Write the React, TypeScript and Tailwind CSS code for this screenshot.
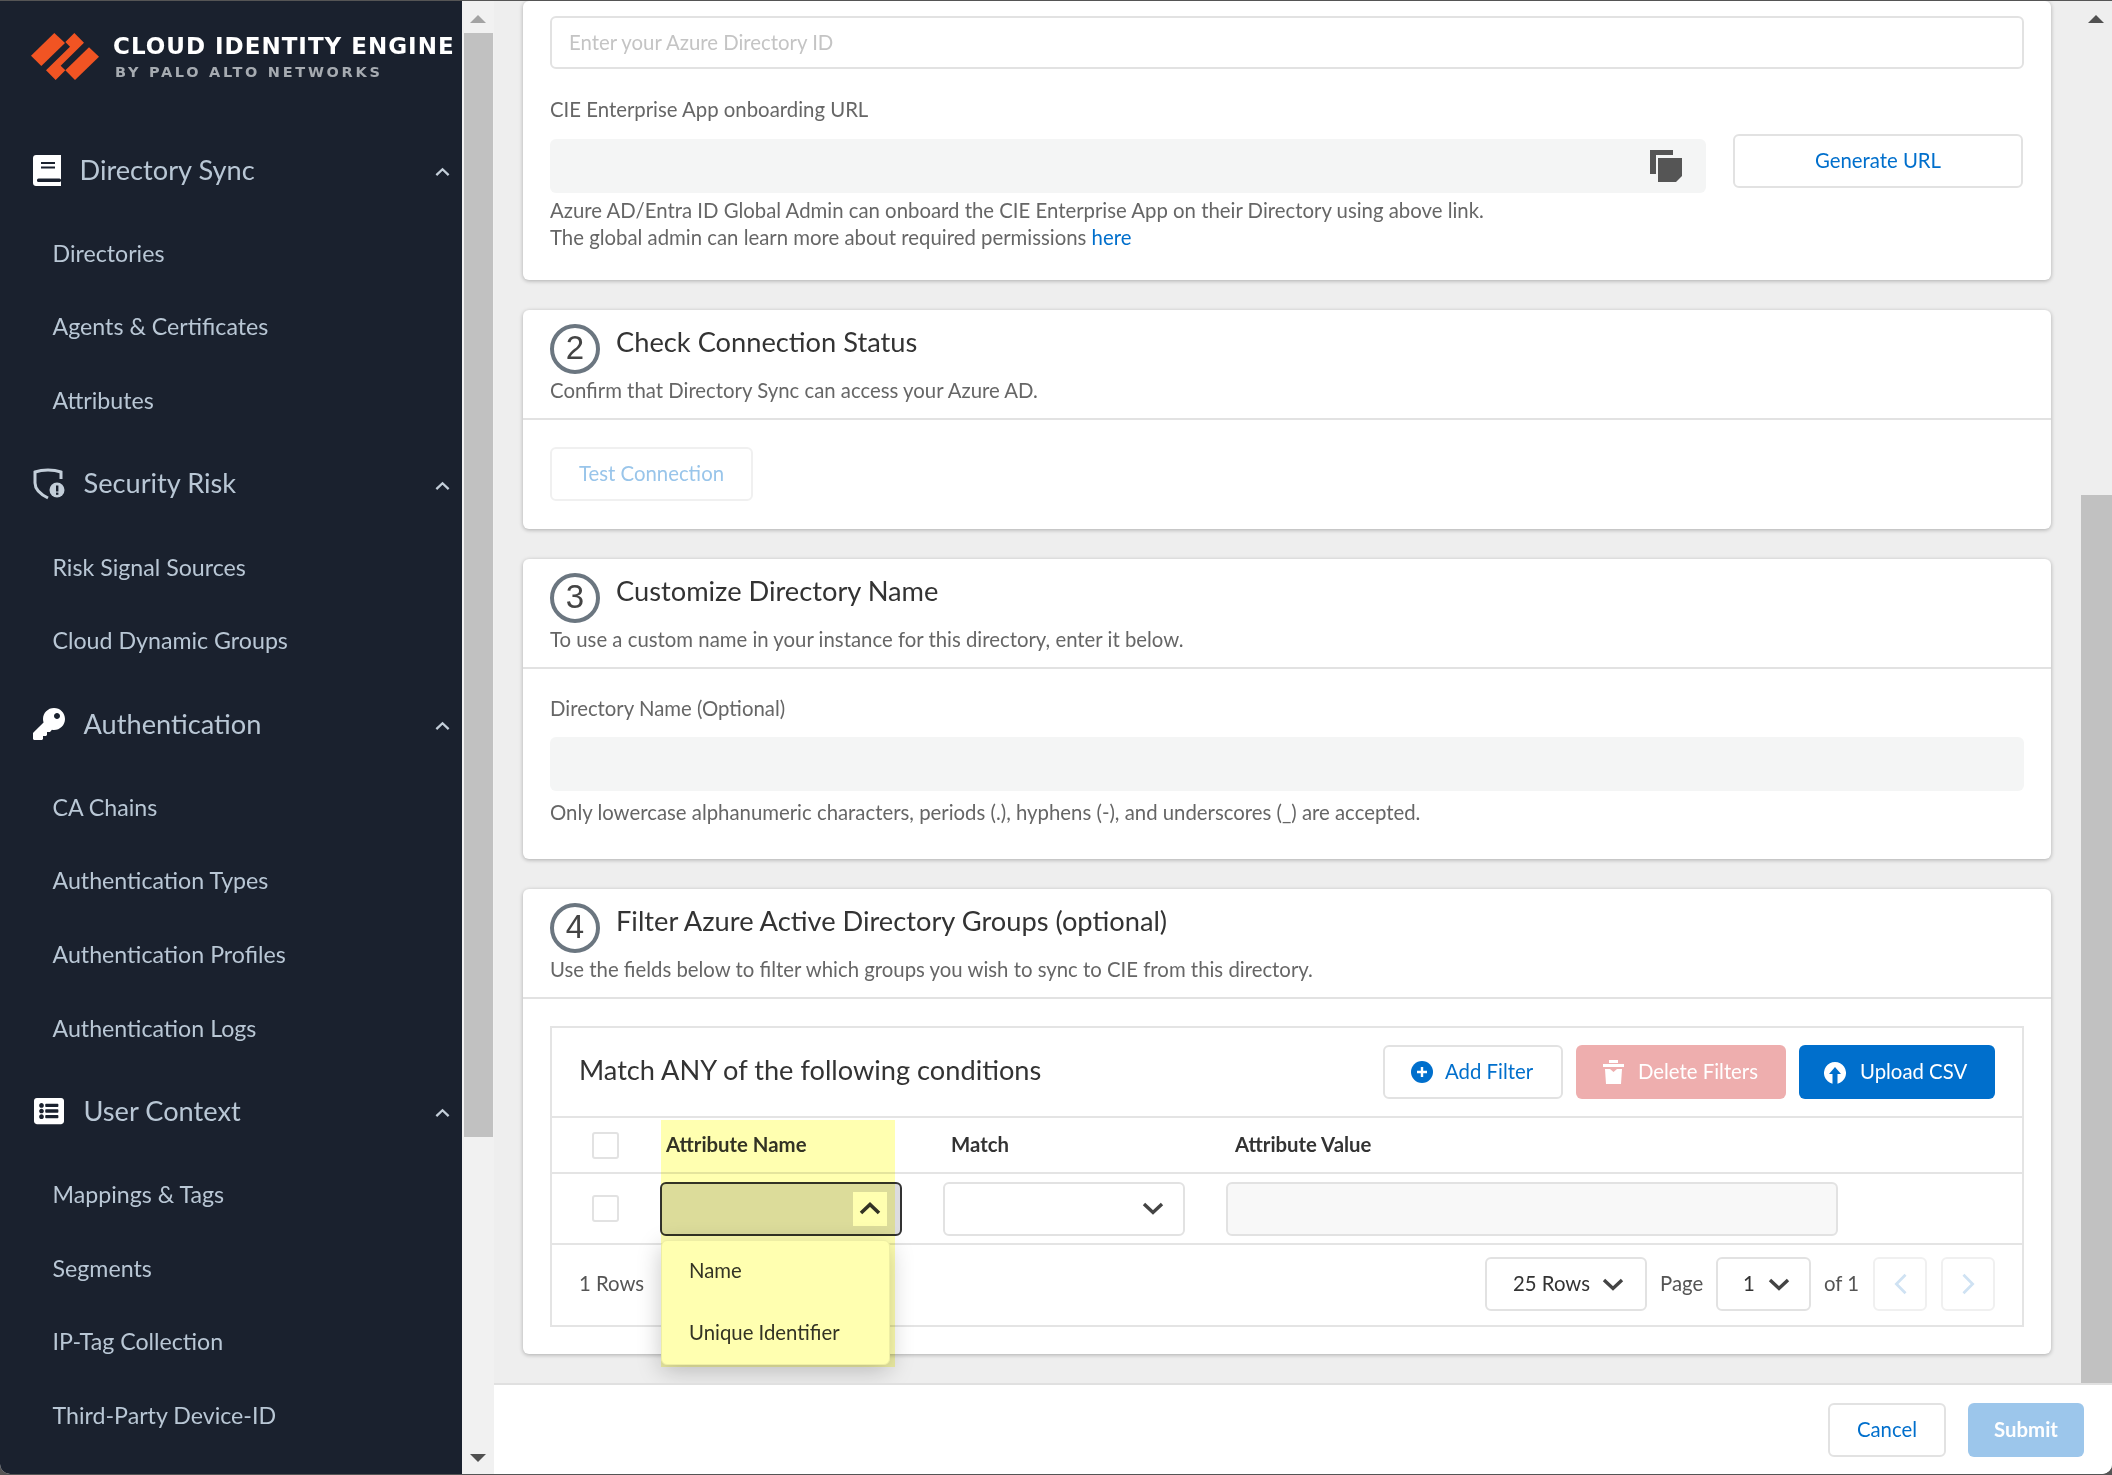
import React from "react";
import { FaKey, FaListAlt } from "react-icons/fa";

const groups = [
  { label: "Directory Sync", icon: "book", items: ["Directories", "Agents & Certificates", "Attributes"] },
  { label: "Security Risk", icon: "shield", items: ["Risk Signal Sources", "Cloud Dynamic Groups"] },
  { label: "Authentication", icon: "key", items: ["CA Chains", "Authentication Types", "Authentication Profiles", "Authentication Logs"] },
  { label: "User Context", icon: "list", items: ["Mappings & Tags", "Segments", "IP-Tag Collection", "Third-Party Device-ID"] },
];

function Chevron({ up, className, color = "#444", sw = 3.2 }: { up?: boolean; className?: string; color?: string; sw?: number }) {
  return (
    <svg viewBox="0 0 22 13" className={className} fill="none">
      <polyline points={up ? "2,11 11,2.5 20,11" : "2,2 11,10.5 20,2"} stroke={color} strokeWidth={sw} />
    </svg>
  );
}

function GroupIcon({ name }: { name: string }) {
  if (name === "book")
    return (
      <svg viewBox="0 0 28 31" className="w-[28px] h-[31px]">
        <path d="M3 0H28V31H3C1.3 31 0 29.7 0 28V3C0 1.3 1.3 0 3 0Z" fill="#fff" />
        <rect x="8" y="7" width="14" height="2" fill="#1a212e" />
        <rect x="8" y="11.5" width="14" height="2" fill="#1a212e" />
        <rect x="4" y="23.5" width="24" height="3.5" rx="1.5" fill="#1a212e" />
      </svg>
    );
  if (name === "shield")
    return (
      <svg viewBox="0 0 32 32" className="w-[32px] h-[32px]">
        <path d="M15 2C10 2 6 2.6 2 4V15C2 21 7 26 15 30" fill="none" stroke="#c3ced9" strokeWidth="3" />
        <path d="M15 2C20 2 24 2.6 28 4V11" fill="none" stroke="#c3ced9" strokeWidth="3" />
        <circle cx="24" cy="22" r="7.5" fill="#c3ced9" />
        <rect x="23" y="17.5" width="2.4" height="6" fill="#1a212e" />
        <rect x="23" y="24.6" width="2.4" height="2.2" fill="#1a212e" />
      </svg>
    );
  if (name === "key") return <FaKey className="w-[32px] h-[32px] text-white" />;
  return <FaListAlt className="w-[32px] h-[30px] text-white" />;
}

function Sidebar() {
  return (
    <aside className="w-[462px] shrink-0 h-full bg-[#1a212e] overflow-hidden">
      <div className="h-[122.5px] flex items-start pl-[31px] pt-[32px]">
        <svg viewBox="33 37 204 141" className="w-[68px] h-[47px] shrink-0" fill="#f15423">
          <polygon points="103,37 135,67 64,136 33,105" />
          <polygon points="163,37 192,66 122,135 136,149 107,178 78,149 150,78 136,64" />
          <polygon points="207,80 237,108 165,178 136,149" />
        </svg>
        <div className="ml-[14px] whitespace-nowrap font-['DejaVu_Sans',sans-serif] font-bold">
          <div className="text-[23px] leading-[26px] text-white tracking-[1px]">CLOUD IDENTITY ENGINE</div>
          <div className="mt-[5px] ml-[2px] text-[14.5px] leading-[16px] text-[#a6abb1] tracking-[2.7px]">BY PALO ALTO NETWORKS</div>
        </div>
      </div>
      {groups.map((g) => (
        <div key={g.label}>
          <div className="h-[93px] flex items-center pl-[33px] pr-[12px]">
            <GroupIcon name={g.icon} />
            <span className="ml-[18.5px] text-[27.2px] text-[#b9c7d5]">{g.label}</span>
            <Chevron up color="#c3ced9" sw={3.4} className="ml-auto w-[15px] h-[10px] mt-[4px]" />
          </div>
          {g.items.map((i) => (
            <div key={i} className="h-[73.6px] flex items-center pl-[52.5px] text-[23.2px] text-[#b9c7d5]">
              {i}
            </div>
          ))}
        </div>
      ))}
    </aside>
  );
}

function SideScrollbar() {
  return (
    <div className="w-[32px] shrink-0 h-full bg-[#f1f1f1] flex flex-col items-center relative">
      <svg viewBox="0 0 16 8" className="w-[16px] h-[8px] mt-[14px]"><polygon points="8,0 16,8 0,8" fill="#a3a3a3" /></svg>
      <div className="w-[29px] h-[1104px] mt-[10px] bg-[#c1c1c1]" />
      <svg viewBox="0 0 16 8" className="w-[16px] h-[8px] mt-auto mb-[12px]"><polygon points="0,0 16,0 8,8" fill="#505050" /></svg>
    </div>
  );
}

function CardHeader({ n, title, sub }: { n: string; title: string; sub: string }) {
  return (
    <div className="h-[110px] border-b-2 border-[#e2e2e2] px-[27px] pt-[14px]">
      <div className="flex items-start">
        <div className="w-[50px] h-[50px] shrink-0 rounded-full border-[4px] border-[#6b7680] flex items-center justify-center font-['Liberation_Sans',sans-serif] text-[33px] leading-[38px] text-[#444] pb-[2px]">
          {n}
        </div>
        <div className="ml-[16px] -mt-[1px] text-[27.25px] leading-[38px] text-[#333]">{title}</div>
      </div>
      <div className="mt-[3px] text-[20.35px] leading-[27px] text-[#666]">{sub}</div>
    </div>
  );
}

const cardCls = "bg-white rounded-[6px] shadow-[0_1px_4px_rgba(0,0,0,0.28)]";

function Card1() {
  return (
    <div className={cardCls + " h-[279px] px-[27px] pt-[15px]"}>
      <div className="h-[53px] border-2 border-[#e2e2e2] rounded-[6px] flex items-center px-[17px] text-[20.35px] text-[#c4c4c4]">
        <span className="-mt-[1px]">Enter your Azure Directory ID</span>
      </div>
      <div className="mt-[27px] text-[20.35px] leading-[27px] text-[#666]">CIE Enterprise App onboarding URL</div>
      <div className="mt-[11px] flex items-start">
        <div className="mt-[5px] w-[1156px] h-[54px] bg-[#f4f5f5] rounded-[6px] flex items-center justify-end pr-[24px]">
          <svg viewBox="0 0 32 32" className="w-[32px] h-[32px]">
            <path d="M0 0H23V5H6V24H0Z" fill="#555" />
            <path d="M8 8H32V26L26 32H8Z" fill="#555" />
          </svg>
        </div>
        <div className="ml-[27px] w-[290px] h-[54px] border-2 border-[#e2e2e2] rounded-[6px] flex items-center justify-center text-[20.35px] text-[#006fcc]">
          <span className="-mt-[2px]">Generate URL</span>
        </div>
      </div>
      <div className="mt-[4px] text-[20.35px] leading-[27px] text-[#666]">
        <div>Azure AD/Entra ID Global Admin can onboard the CIE Enterprise App on their Directory using above link.</div>
        <div>
          The global admin can learn more about required permissions <span className="text-[#006fcc]">here</span>
        </div>
      </div>
    </div>
  );
}

function Card2() {
  return (
    <div className={cardCls + " h-[219px]"}>
      <CardHeader n="2" title="Check Connection Status" sub="Confirm that Directory Sync can access your Azure AD." />
      <div className="px-[27px] pt-[27px]">
        <div className="w-[203px] h-[54px] border-2 border-[#f0f0f0] rounded-[6px] flex items-center justify-center text-[20.35px] text-[#99c5ea]">
          <span className="-mt-[1px]">Test Connection</span>
        </div>
      </div>
    </div>
  );
}

function Card3() {
  return (
    <div className={cardCls + " h-[300px]"}>
      <CardHeader n="3" title="Customize Directory Name" sub="To use a custom name in your instance for this directory, enter it below." />
      <div className="px-[27px] pt-[26px]">
        <div className="text-[20.35px] leading-[27px] text-[#666]">Directory Name (Optional)</div>
        <div className="mt-[15px] h-[54px] bg-[#f4f5f5] rounded-[6px]" />
        <div className="mt-[8px] text-[20.35px] leading-[27px] text-[#666]">
          Only lowercase alphanumeric characters, periods (.), hyphens (-), and underscores (_) are accepted.
        </div>
      </div>
    </div>
  );
}

function PagerBox({ w, ml, children }: { w: string; ml: string; children: React.ReactNode }) {
  return <div className={`${w} ${ml} h-[54px] border-2 border-[#e2e2e2] rounded-[6px] flex items-center text-[20.35px] text-[#333]`}>{children}</div>;
}

function FilterTable() {
  return (
    <div className="relative h-[301px] border-2 border-[#e4e4e4] flex flex-col">
      <div className="h-[88px] shrink-0 flex items-center pl-[27px]">
        <div className="text-[27.2px] text-[#333] -mt-[3px]">Match ANY of the following conditions</div>
        <div className="ml-auto flex items-center mr-[27px] text-[20.35px]">
          <div className="w-[180px] h-[54px] border-2 border-[#e2e2e2] rounded-[6px] flex items-center pl-[26px] text-[#006fcc]">
            <svg viewBox="0 0 22 22" className="w-[22px] h-[22px]">
              <circle cx="11" cy="11" r="11" fill="#006fcc" />
              <path d="M11 6V16M6 11H16" stroke="#fff" strokeWidth="2.4" />
            </svg>
            <span className="ml-[12px] -mt-[1px]">Add Filter</span>
          </div>
          <div className="ml-[13px] w-[210px] h-[54px] bg-[#eeaeae] rounded-[6px] flex items-center pl-[27px] text-white">
            <svg viewBox="0 0 21 24" className="w-[21px] h-[24px]" fill="#fff">
              <rect x="6" y="0" width="9" height="3" />
              <rect x="0" y="4" width="21" height="3" />
              <path d="M2 9H7L10.5 12L14 9H19L18 24H3Z" />
            </svg>
            <span className="ml-[14px] -mt-[1px]">Delete Filters</span>
          </div>
          <div className="ml-[13px] w-[196px] h-[54px] bg-[#006fcc] rounded-[6px] flex items-center pl-[25px] text-white">
            <svg viewBox="0 0 22 24" className="w-[22px] h-[24px]">
              <path d="M8.5 23.7A11 11 0 1 1 13.5 23.7V14H17L11 7L5 14H8.5Z" fill="#fff" />
            </svg>
            <span className="ml-[14px] -mt-[1px]">Upload CSV</span>
          </div>
        </div>
      </div>
      <div className="h-[56px] shrink-0 border-t-2 border-[#e4e4e4] grid grid-cols-[108px_283px_282px_1fr] items-center text-[20.35px] font-bold text-[#333]">
        <div className="ml-[40px] w-[27px] h-[27px] border-2 border-[#e2e2e2] rounded-[3px]" />
        <div className="pl-[6px] -mt-[2px]">Attribute Name</div>
        <div className="pl-[8px] -mt-[2px]">Match</div>
        <div className="pl-[10px] -mt-[2px]">Attribute Value</div>
      </div>
      <div className="h-[71px] shrink-0 border-t-2 border-[#e4e4e4] grid grid-cols-[108px_283px_283px_1fr] items-center">
        <div className="ml-[40px] w-[27px] h-[27px] border-2 border-[#e2e2e2] rounded-[3px]" />
        <div className="relative">
          <div className="w-[242px] h-[54px] border-2 border-[#333] rounded-[6px] bg-[#dcdce0] flex items-center justify-end pr-[13px]">
            <div className="w-[34px] h-[34px] bg-white flex items-center justify-center">
              <Chevron up color="#333" sw={3.6} className="w-[22px] h-[13px]" />
            </div>
          </div>
          <div className="absolute left-[1px] top-[58px] w-[229px] h-[125px] z-10 bg-white border border-[#eee] rounded-[6px] shadow-[0_6px_24px_rgba(0,0,0,0.22)] text-[20.35px] text-[#333]">
            <div className="h-[62px] flex items-center pl-[27px] -mt-[1px]">Name</div>
            <div className="h-[62px] flex items-center pl-[27px]">Unique Identifier</div>
          </div>
        </div>
        <div className="w-[242px] h-[54px] border-2 border-[#e2e2e2] rounded-[6px] flex items-center justify-end pr-[19px]">
          <Chevron color="#444" sw={3.4} className="w-[22px] h-[13px]" />
        </div>
        <div className="w-[612px] h-[54px] border-2 border-[#e2e2e2] rounded-[6px] bg-[#f8f8f8]" />
      </div>
      <div className="flex-1 border-t-2 border-[#e4e4e4] flex items-center pl-[27px] pb-[2px] text-[20.35px] text-[#555]">
        <div className="-mt-[2px]">1 Rows</div>
        <div className="ml-auto flex items-center pr-[27px]">
          <PagerBox w="w-[162px]" ml="">
            <span className="ml-[26px] -mt-[1px]">25 Rows</span>
            <Chevron color="#444" sw={3.4} className="ml-[12px] w-[22px] h-[13px]" />
          </PagerBox>
          <span className="ml-[13px] w-[43px] -mt-[1px]">Page</span>
          <PagerBox w="w-[95px]" ml="ml-[13px]">
            <span className="ml-[25px] -mt-[1px]">1</span>
            <Chevron color="#444" sw={3.4} className="ml-[13px] w-[22px] h-[13px]" />
          </PagerBox>
          <span className="ml-[13px] w-[36px] -mt-[1px] whitespace-nowrap">of 1</span>
          <div className="ml-[13px] w-[54px] h-[54px] border-2 border-[#f0f0f0] rounded-[6px] flex items-center justify-center">
            <svg viewBox="0 0 15 24" className="w-[15px] h-[22px]" fill="none"><polyline points="13,2 3,12 13,22" stroke="#cfe2f3" strokeWidth="3" /></svg>
          </div>
          <div className="ml-[14px] w-[54px] h-[54px] border-2 border-[#f0f0f0] rounded-[6px] flex items-center justify-center">
            <svg viewBox="0 0 15 24" className="w-[15px] h-[22px]" fill="none"><polyline points="2,2 12,12 2,22" stroke="#cfe2f3" strokeWidth="3" /></svg>
          </div>
        </div>
      </div>
      <div className="absolute left-[109px] top-[92px] w-[234px] h-[247px] z-20 bg-[#ffffb0] mix-blend-multiply pointer-events-none" />
    </div>
  );
}

function Card4() {
  return (
    <div className={cardCls + " h-[465px]"}>
      <CardHeader n="4" title="Filter Azure Active Directory Groups (optional)" sub="Use the fields below to filter which groups you wish to sync to CIE from this directory." />
      <div className="px-[27px] pt-[27px]">
        <FilterTable />
      </div>
    </div>
  );
}

export default function App() {
  return (
    <div className="w-[2112px] h-[1475px] bg-[#555] pt-[1px] pb-[1px] font-['Lato',sans-serif] overflow-hidden">
      <div className="w-full h-full rounded-b-[10px] overflow-hidden flex bg-white">
        <Sidebar />
        <SideScrollbar />
        <main className="flex-1 min-w-0 flex flex-col h-full">
          <div className="flex-1 min-h-0 flex bg-[#eeeeee] overflow-hidden">
            <div className="flex-1 min-w-0 pl-[29px] pr-[29px] flex flex-col gap-[30px]">
              <Card1 />
              <Card2 />
              <Card3 />
              <Card4 />
            </div>
            <div className="w-[32px] shrink-0 flex flex-col items-center">
              <svg viewBox="0 0 16 8" className="w-[16px] h-[8px] mt-[14px]"><polygon points="8,0 16,8 0,8" fill="#505050" /></svg>
              <div className="w-[31px] self-end flex-1 mt-[472px] bg-[#c1c1c1]" />
            </div>
          </div>
          <footer className="h-[91px] shrink-0 bg-white border-t-2 border-[#e0e0e0] flex items-center justify-end pr-[28px] text-[20.35px]">
            <div className="w-[118px] h-[54px] border-2 border-[#e2e2e2] rounded-[6px] flex items-center justify-center text-[#006fcc]">Cancel</div>
            <div className="ml-[22px] w-[116px] h-[54px] rounded-[6px] bg-[#9cc6eb] flex items-center justify-center text-white font-bold">Submit</div>
          </footer>
        </main>
      </div>
    </div>
  );
}
